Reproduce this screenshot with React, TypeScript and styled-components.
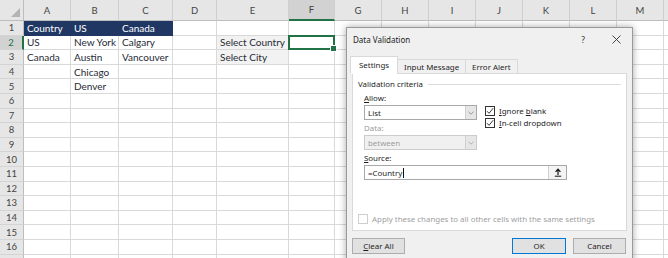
import styled, { createGlobalStyle } from 'styled-components';

const GlobalStyle = createGlobalStyle`
  html, body {
    margin: 0;
    padding: 0;
    background: #ffffff;
    overflow: hidden;
  }
`;

// the last column is only a sliver at the right edge, so it shows no letter
const COLS = ['A', 'B', 'C', 'D', 'E', 'F', 'G', 'H', 'I', 'J', 'K', 'L', 'M', ''];
const WIDTHS = [47, 48, 54, 44, 72, 46, 47, 47, 47, 47, 47, 47, 47, 12];
const ROWS = 17;
const LABELLED_ROWS = 16;

type Kind = 'plain' | 'head' | 'note';

const cells: Record<string, { text: string; kind?: Kind }> = {
  A1: { text: 'Country', kind: 'head' },
  B1: { text: 'US', kind: 'head' },
  C1: { text: 'Canada', kind: 'head' },
  A2: { text: 'US' },
  B2: { text: 'New York' },
  C2: { text: 'Calgary' },
  E2: { text: 'Select Country', kind: 'note' },
  A3: { text: 'Canada' },
  B3: { text: 'Austin' },
  C3: { text: 'Vancouver' },
  E3: { text: 'Select City', kind: 'note' },
  B4: { text: 'Chicago' },
  B5: { text: 'Denver' },
};

const Page = styled.div`
  position: relative;
  width: 668px;
  height: 258px;
  overflow: hidden;
`;

const Grid = styled.div`
  display: grid;
  grid-template-columns: 24px ${WIDTHS.map((w) => `${w}px`).join(' ')};
  grid-template-rows: 21px repeat(${ROWS}, 14.6px);
  font-family: Lato, 'Liberation Sans', sans-serif;
`;

const Corner = styled.div`
  position: relative;
  background: #e6e6e6;
  border-right: 1px solid #bdbdbd;
  border-bottom: 1px solid #bdbdbd;
  box-sizing: border-box;

  &::after {
    content: '';
    position: absolute;
    right: 3px;
    bottom: 3px;
    border-style: solid;
    border-width: 0 0 9px 9px;
    border-color: transparent transparent #b4b4b4 transparent;
  }
`;

const ColHead = styled.div<{ $active?: boolean }>`
  display: flex;
  align-items: center;
  justify-content: center;
  box-sizing: border-box;
  background: ${(p) => (p.$active ? '#d2d2d2' : '#e6e6e6')};
  border-right: 1px solid #cfcfcf;
  border-bottom: ${(p) => (p.$active ? '2px solid #217346' : '1px solid #bdbdbd')};
  color: #444444;
  font-size: 9.5px;
`;

const RowHead = styled.div<{ $active?: boolean }>`
  display: flex;
  align-items: center;
  justify-content: center;
  box-sizing: border-box;
  background: ${(p) => (p.$active ? '#d2d2d2' : '#e6e6e6')};
  border-right: ${(p) => (p.$active ? '2px solid #217346' : '1px solid #bdbdbd')};
  border-bottom: 1px solid #d4d4d4;
  color: ${(p) => (p.$active ? '#217346' : '#444444')};
  font-size: 9.5px;
`;

const Cell = styled.div<{ $kind: Kind; $selected?: boolean }>`
  position: relative;
  display: flex;
  align-items: center;
  padding-left: 3px;
  box-sizing: border-box;
  white-space: nowrap;
  font-size: 10px;
  background: ${(p) => (p.$kind === 'head' ? '#203764' : p.$kind === 'note' ? '#f2f2f2' : '#ffffff')};
  color: ${(p) => (p.$kind === 'head' ? '#ffffff' : '#262a36')};
  border-right: 1px solid ${(p) => (p.$kind === 'head' ? '#203764' : '#d9d9d9')};
  border-bottom: 1px solid ${(p) => (p.$kind === 'head' ? '#203764' : '#d9d9d9')};

  ${(p) =>
    p.$selected &&
    `
    &::after {
      content: '';
      position: absolute;
      inset: -1px -1px -1px -1px;
      border: 2px solid #217346;
    }
    &::before {
      content: '';
      position: absolute;
      right: -3px;
      bottom: -3px;
      width: 5px;
      height: 5px;
      background: #217346;
      border: 1px solid #ffffff;
      z-index: 1;
    }
  `}
`;

function Sheet() {
  const out = [<Corner key="corner" />];
  COLS.forEach((c, i) => out.push(<ColHead key={`c${i}`} $active={c === 'F'}>{c}</ColHead>));
  for (let r = 1; r <= ROWS; r++) {
    out.push(
      <RowHead key={`r${r}`} $active={r === 2}>
        {r <= LABELLED_ROWS ? r : ''}
      </RowHead>,
    );
    COLS.forEach((c, i) => {
      const id = `${c}${r}`;
      const data = c ? cells[id] : undefined;
      out.push(
        <Cell key={`${i}-${r}`} $kind={data?.kind ?? 'plain'} $selected={id === 'F2'}>
          {data?.text}
        </Cell>,
      );
    });
  }
  return <Grid>{out}</Grid>;
}

/* ---------- dialog ---------- */

const Dialog = styled.div`
  position: absolute;
  left: 346px;
  top: 27px;
  width: 287px;
  height: 245px;
  box-sizing: border-box;
  background: #f0f0f0;
  border: 1px solid #9a9a9a;
  box-shadow: 0 0 7px rgba(0, 0, 0, 0.35);
  font-family: 'Noto Sans', 'Open Sans', sans-serif;
  font-size: 7.9px;
  color: #1e1e1e;
  display: flex;
  flex-direction: column;
`;

const TitleBar = styled.div`
  display: flex;
  align-items: center;
  height: 23px;
  padding: 0 10px 0 6px;
  font-size: 8px;
`;

const Title = styled.div`
  flex: 1;
`;

const TitleButton = styled.div`
  display: flex;
  align-items: center;
  justify-content: center;
  width: 12px;
  margin-left: 21px;
  font-size: 8.5px;
  color: #333;
`;

const Body = styled.div`
  display: flex;
  flex-direction: column;
  padding: 5px 5px 0 5px;
`;

const Tabs = styled.div`
  display: flex;
  align-items: flex-end;
  height: 17px;
  margin-left: -2px;
  position: relative;
  z-index: 1;
`;

const Tab = styled.div<{ $active?: boolean }>`
  display: flex;
  align-items: center;
  justify-content: center;
  box-sizing: border-box;
  height: ${(p) => (p.$active ? '18px' : '15px')};
  padding: 0 ${(p) => (p.$active ? '8px' : '6px')};
  margin-bottom: -1px;
  background: ${(p) => (p.$active ? '#ffffff' : '#f0f0f0')};
  border: 1px solid #d9d9d9;
  border-bottom: ${(p) => (p.$active ? '1px solid #ffffff' : '1px solid #d9d9d9')};
  margin-left: ${(p) => (p.$active ? '0' : '-1px')};
`;

const Panel = styled.div`
  display: flex;
  flex-direction: column;
  height: 158px;
  box-sizing: border-box;
  padding: 4px 5px 6px 5px;
  background: #ffffff;
  border: 1px solid #d9d9d9;
`;

const Legend = styled.div`
  display: flex;
  align-items: center;
  height: 12px;
  gap: 5px;

  &::after {
    content: '';
    flex: 1;
    height: 1px;
    background: #dcdcdc;
  }
`;

const Criteria = styled.div`
  display: flex;
  flex-direction: column;
  padding-left: 6px;
  margin-top: 2px;
`;

const Columns = styled.div`
  display: flex;
  gap: 8px;
`;

const Field = styled.div`
  display: flex;
  flex-direction: column;
  margin-bottom: 2px;
`;

const Label = styled.div<{ $disabled?: boolean }>`
  height: 13px;
  line-height: 13px;
  color: ${(p) => (p.$disabled ? '#9d9d9d' : '#1e1e1e')};
`;

const Select = styled.div<{ $disabled?: boolean; $width: number }>`
  display: flex;
  align-items: stretch;
  width: ${(p) => p.$width}px;
  height: 15px;
  box-sizing: border-box;
  border: 1px solid ${(p) => (p.$disabled ? '#cccccc' : '#a8a8a8')};
  background: ${(p) => (p.$disabled ? '#f0f0f0' : '#ffffff')};
  color: ${(p) => (p.$disabled ? '#9d9d9d' : '#1e1e1e')};
`;

const SelectText = styled.div`
  flex: 1;
  display: flex;
  align-items: center;
  padding-left: 3px;
`;

const SelectArrow = styled.div`
  display: flex;
  align-items: center;
  justify-content: center;
  width: 10px;
  background: #e6e6e6;
  border-left: 1px solid #d0d0d0;
`;

const Caret = styled.span`
  width: 1px;
  height: 10px;
  background: #111;
  margin-left: 0.5px;
`;

const PickButton = styled.div`
  display: flex;
  align-items: center;
  justify-content: center;
  width: 17px;
  border-left: 1px solid #d0d0d0;
  background: #f4f4f4;
`;

const Checks = styled.div`
  display: flex;
  flex-direction: column;
  gap: 2px;
  padding-top: 14px;
`;

const CheckRow = styled.div<{ $disabled?: boolean }>`
  display: flex;
  align-items: center;
  gap: 4px;
  height: 10px;
  color: ${(p) => (p.$disabled ? '#a0a0a0' : '#1e1e1e')};
`;

const Box = styled.div<{ $disabled?: boolean }>`
  display: flex;
  align-items: center;
  justify-content: center;
  width: 10px;
  height: 10px;
  box-sizing: border-box;
  border: 1px solid ${(p) => (p.$disabled ? '#cfcfcf' : '#333333')};
  background: #ffffff;
`;

const Spacer = styled.div`
  flex: 1;
`;

const Buttons = styled.div`
  display: flex;
  align-items: center;
  margin-top: 7px;
`;

const Button = styled.div<{ $primary?: boolean; $gap?: number }>`
  display: flex;
  align-items: center;
  justify-content: center;
  width: ${(p) => (p.$primary ? 54 : 53)}px;
  height: 16px;
  box-sizing: border-box;
  margin-left: ${(p) => p.$gap ?? 0}px;
  background: #e1e1e1;
  border: ${(p) => (p.$primary ? '1.5px solid #0078d7' : '1px solid #adadad')};
`;

function Chevron({ color = '#8a8a8a' }: { color?: string }) {
  return (
    <svg width="6" height="4" viewBox="0 0 6 4">
      <path d="M0.5 0.8 L3 3.2 L5.5 0.8" fill="none" stroke={color} strokeWidth="0.9" />
    </svg>
  );
}

function Tick() {
  return (
    <svg width="8" height="8" viewBox="0 0 8 8">
      <path d="M1 4.2 L3 6.3 L7.2 1.2" fill="none" stroke="#222" strokeWidth="0.9" />
    </svg>
  );
}

function CloseIcon() {
  return (
    <svg width="9" height="9" viewBox="0 0 9 9">
      <path d="M0.5 0.5 L8.5 8.5 M8.5 0.5 L0.5 8.5" stroke="#333" strokeWidth="0.9" />
    </svg>
  );
}

function PickIcon() {
  return (
    <svg width="8" height="9" viewBox="0 0 8 9">
      <path d="M4 7 V1.5 M1.6 3.9 L4 1.2 L6.4 3.9" fill="none" stroke="#111" strokeWidth="1.2" />
      <path d="M0.8 8.2 H7.2" stroke="#111" strokeWidth="1" />
    </svg>
  );
}

function ValidationDialog() {
  return (
    <Dialog>
      <TitleBar>
        <Title>Data Validation</Title>
        <TitleButton>?</TitleButton>
        <TitleButton>
          <CloseIcon />
        </TitleButton>
      </TitleBar>
      <Body>
        <Tabs>
          <Tab $active>Settings</Tab>
          <Tab>Input Message</Tab>
          <Tab>Error Alert</Tab>
        </Tabs>
        <Panel>
          <Legend>Validation criteria</Legend>
          <Criteria>
            <Columns>
              <div>
                <Field>
                  <Label>
                    <u>A</u>llow:
                  </Label>
                  <Select $width={113}>
                    <SelectText>List</SelectText>
                    <SelectArrow>
                      <Chevron />
                    </SelectArrow>
                  </Select>
                </Field>
                <Field>
                  <Label $disabled>Data:</Label>
                  <Select $width={113} $disabled>
                    <SelectText>between</SelectText>
                    <SelectArrow>
                      <Chevron color="#a8a8a8" />
                    </SelectArrow>
                  </Select>
                </Field>
              </div>
              <Checks>
                <CheckRow>
                  <Box>
                    <Tick />
                  </Box>
                  <span>
                    <u>I</u>gnore <u>b</u>lank
                  </span>
                </CheckRow>
                <CheckRow>
                  <Box>
                    <Tick />
                  </Box>
                  <span>
                    <u>I</u>n-cell dropdown
                  </span>
                </CheckRow>
              </Checks>
            </Columns>
            <Field>
              <Label>
                <u>S</u>ource:
              </Label>
              <Select $width={203}>
                <SelectText>
                  =Country
                  <Caret />
                </SelectText>
                <PickButton>
                  <PickIcon />
                </PickButton>
              </Select>
            </Field>
          </Criteria>
          <Spacer />
          <CheckRow $disabled>
            <Box $disabled />
            <span>Apply these changes to all other cells with the same settings</span>
          </CheckRow>
        </Panel>
        <Buttons>
          <Button>
            <span>
              <u>C</u>lear All
            </span>
          </Button>
          <Button $primary $gap={107}>
            OK
          </Button>
          <Button $gap={7}>Cancel</Button>
        </Buttons>
      </Body>
    </Dialog>
  );
}

export default function App() {
  return (
    <Page>
      <GlobalStyle />
      <Sheet />
      <ValidationDialog />
    </Page>
  );
}
